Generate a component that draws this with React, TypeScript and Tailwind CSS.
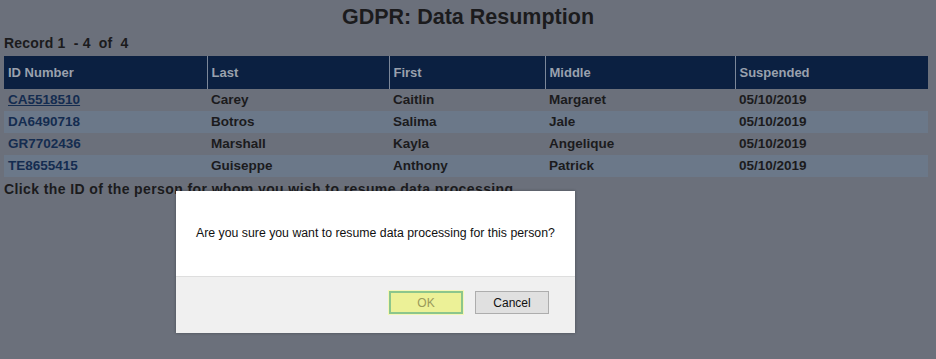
import React from "react"

const rows = [
  { id: "CA5518510", last: "Carey", first: "Caitlin", middle: "Margaret", date: "05/10/2019" },
  { id: "DA6490718", last: "Botros", first: "Salima", middle: "Jale", date: "05/10/2019" },
  { id: "GR7702436", last: "Marshall", first: "Kayla", middle: "Angelique", date: "05/10/2019" },
  { id: "TE8655415", last: "Guiseppe", first: "Anthony", middle: "Patrick", date: "05/10/2019" },
]

const thClass = "text-left font-bold text-[13px] text-[#9aa1ad] px-[4px] h-[33px] border-l border-[#7c8799] first:border-l-0"
const tdClass = "px-[4px] h-[22px] text-[13.5px] font-bold text-[#1b1b1d]"

export default function App() {
  return (
    <div className="relative w-[936px] h-[359px] bg-[#6b707b] font-['Liberation_Sans',Arial,sans-serif] overflow-hidden">
      <div className="px-[4px]">
        <h1 className="text-center text-[21.5px] font-bold text-[#1b1b1d] pt-[5px] leading-[24px]">
          GDPR: Data Resumption
        </h1>
        <p className="text-[14px] font-bold text-[#1b1b1d] mt-[6px] leading-[16px] whitespace-pre tracking-[0.2px]">
          Record 1  - 4  of  4
        </p>
        <table className="w-[924px] mt-[5px] border-collapse table-fixed">
          <colgroup>
            <col className="w-[203px]" />
            <col className="w-[182px]" />
            <col className="w-[156px]" />
            <col className="w-[190px]" />
            <col className="w-[193px]" />
          </colgroup>
          <thead>
            <tr className="bg-[#0b2041]">
              <th className={thClass}>ID Number</th>
              <th className={thClass}>Last</th>
              <th className={thClass}>First</th>
              <th className={thClass}>Middle</th>
              <th className={thClass}>Suspended</th>
            </tr>
          </thead>
          <tbody>
            {rows.map((r, i) => (
              <tr key={r.id} className={i % 2 === 1 ? "bg-[#6b7889]" : "bg-[#6b707b]"}>
                <td className={tdClass}>
                  <a href="#" className={"text-[#142c50] " + (i === 0 ? "underline" : "no-underline")}>
                    {r.id}
                  </a>
                </td>
                <td className={tdClass}>{r.last}</td>
                <td className={tdClass}>{r.first}</td>
                <td className={tdClass}>{r.middle}</td>
                <td className={tdClass}>{r.date}</td>
              </tr>
            ))}
          </tbody>
        </table>
        <p className="text-[14px] font-bold text-[#1b1b1d] mt-[4px] leading-[16px] tracking-[0.4px]">
          Click the ID of the person for whom you wish to resume data processing
        </p>
      </div>

      {/* confirm dialog */}
      <div className="absolute left-[176px] top-[191px] w-[399px] h-[142px] bg-white shadow-[0_0_3px_rgba(0,0,0,0.3)] flex flex-col">
        <div className="h-[86px] flex items-center pl-[20px] text-[12.3px] text-[#111] border-b border-[#dedede]">
          Are you sure you want to resume data processing for this person?
        </div>
        <div className="flex-1 bg-[#f0f0f0] flex justify-end items-start pt-[14px] pr-[26px] gap-[12px]">
          <button className="w-[74px] h-[23px] bg-[#ecf197] border-[2px] border-[#8cc68c] outline outline-1 outline-[#f5f7b8] text-[12px] text-[#9a9a5a]">
            OK
          </button>
          <button className="w-[74px] h-[23px] bg-[#e0e0e0] border border-[#adadad] text-[12px] text-[#111]">
            Cancel
          </button>
        </div>
      </div>
    </div>
  )
}
